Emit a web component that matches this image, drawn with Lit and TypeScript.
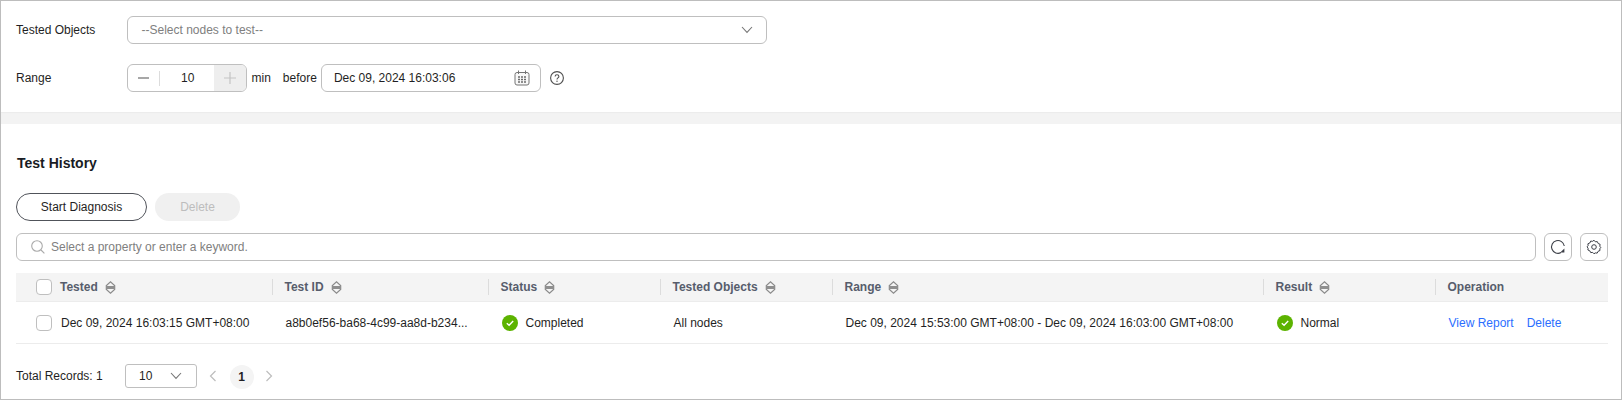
import { LitElement, html, css } from "lit";
import { customElement } from "lit/decorators.js";

const sortIcon = html`<svg class="sort" width="11" height="13" viewBox="0 0 11 13"><path d="M.9 5 5.5.8 10.1 5M.9 8l4.6 4.2L10.100 8" fill="none" stroke="#8a8a8a" stroke-width="1.1"/><path d="M.7 5h9.600v3H.7z" fill="#8f8f8f"/></svg>`;
const okIcon = html`<svg class="ok" width="16" height="16" viewBox="0 0 16 16"><circle cx="8" cy="8" r="8" fill="#5cb300"/><path d="M4.8 8.2 7.1 10.3 11.2 6" fill="none" stroke="#fff" stroke-width="1.4"/></svg>`;
const chev = (c: string) => html`<svg width="12" height="8" viewBox="0 0 12 8"><path d="M1 1l5 5.4L11 1" fill="none" stroke="${c}" stroke-width="1.1"/></svg>`;

const cols = [
  { label: "Tested", check: true },
  { label: "Test ID" },
  { label: "Status" },
  { label: "Tested Objects" },
  { label: "Range" },
  { label: "Result" },
  { label: "Operation", nosort: true },
];

@customElement("app-root")
export class AppRoot extends LitElement {
  static styles = css`
    :host { display: block; width: 1622px; height: 400px; box-sizing: border-box; border: 1px solid #bdbdbd; font: 12px "Liberation Sans", Arial, sans-serif; color: #1f1f24; background: #fff; overflow: hidden; }
    .top { height: 111px; box-sizing: border-box; padding: 15px 0 0 15px; display: flex; flex-direction: column; gap: 20px; }
    .row { display: flex; align-items: center; height: 28px; }
    .lbl { width: 111px; flex: none; }
    .box { box-sizing: border-box; height: 28px; border: 1px solid #bfbfbf; border-radius: 6px; display: flex; align-items: center; background: #fff; }
    .sel { width: 639.5px; padding: 0 13px 0 13.5px; justify-content: space-between; color: #808080; }
    .stepper { width: 119.5px; overflow: hidden; }
    .stepper .minus { width: 31px; height: 15px; display: flex; align-items: center; justify-content: center; border-right: 1px solid #dcdcdc; }
    .stepper .val { flex: 1; text-align: center; padding-left: 2px; }
    .stepper .plus { width: 32px; height: 100%; background: #eeeeee; display: flex; align-items: center; justify-content: center; }
    .min { margin-left: 5px; }
    .before { margin-left: 12px; margin-right: 4px; }
    .date { width: 220px; padding: 0 10px 0 12px; justify-content: space-between; }
    .help { margin-left: 9px; display: block; }
    .gap { height: 12px; background: #f3f3f3; box-shadow: inset 0 1px 1px #ececec; }
    .bottom { padding: 0 13px 0 15px; }
    h2 { margin: 0; font-size: 14px; font-weight: 700; line-height: 16px; padding: 31px 0 0 1px; color: #191c24; }
    .btns { display: flex; gap: 8px; margin-top: 22px; }
    .btn { box-sizing: border-box; height: 28px; border-radius: 14px; display: flex; align-items: center; justify-content: center; }
    .start { width: 131px; border: 1px solid #50535a; }
    .del { width: 85px; background: #f0f0f0; color: #bdbdbd; }
    .search { display: flex; gap: 8px; margin-top: 12px; }
    .sbox { flex: 1; padding-left: 14px; color: #808080; gap: 6px; }
    .sq { width: 28px; padding: 0; justify-content: center; flex: none; }
    .table { margin-top: 12px; display: grid; grid-template-columns: 255.5px 216px 172px 172px 431px 172px 173.5px; }
    .th { height: 29px; background: #f4f4f4; border-bottom: 1px solid #ececec; box-sizing: border-box; display: flex; align-items: center; font-weight: 700; color: #575d6c; gap: 7px; padding-left: 13px; position: relative; }
    .th + .th::before { content: ""; position: absolute; left: 0; top: 6px; height: 16px; width: 1px; background: #dcdcdc; }
    .th.first, .td.first { padding-left: 20px; }
    .th.first { gap: 8px; }
    .th.first .sort { margin-left: -1px; }
    .cb { width: 16px; height: 16px; box-sizing: border-box; border: 1px solid #bfbfbf; border-radius: 4px; background: #fff; flex: none; }
    .td { height: 42px; box-sizing: border-box; border-bottom: 1px solid #ececec; display: flex; align-items: center; padding-left: 14px; gap: 8px; white-space: nowrap; }
    .td.first { gap: 9px; }
    a { color: #2b6eff; text-decoration: none; }
    .ops { gap: 13px; }
    .foot { display: flex; align-items: center; margin-top: 20px; height: 24px; }
    .total { width: 109px; }
    .psel { width: 72px; height: 24px; border-radius: 3px; padding: 0 14px 0 13px; justify-content: space-between; }
    .pg { display: flex; align-items: center; margin-left: 12px; }
    .pn { width: 24px; height: 24px; border-radius: 12px; background: #f4f4f4; font-weight: 700; display: flex; align-items: center; justify-content: center; margin: 1px 11.5px 0 12.5px; }
  `;

  render() {
    return html`
      <div class="top">
        <div class="row">
          <div class="lbl">Tested Objects</div>
          <div class="box sel"><span>--Select nodes to test--</span>${chev("#777")}</div>
        </div>
        <div class="row">
          <div class="lbl">Range</div>
          <div class="box stepper">
            <div class="minus"><svg width="11" height="2" viewBox="0 0 11 2"><path d="M0 1h11" stroke="#8a8a8a" stroke-width="1.6"/></svg></div>
            <div class="val">10</div>
            <div class="plus"><svg width="12" height="12" viewBox="0 0 12 12"><path d="M0 6h12M6 0v12" stroke="#c4c4c4" stroke-width="1.2"/></svg></div>
          </div>
          <span class="min">min</span>
          <span class="before">before</span>
          <div class="box date"><span>Dec 09, 2024 16:03:06</span>
            <svg width="16" height="16" viewBox="0 0 16 16"><rect x="1" y="2.500" width="14" height="12.500" rx="2" fill="#f8f8f8" stroke="#757575"/><path d="M4.500 0.500v3.500M11.500 0.500v3.500" stroke="#757575"/><path d="M4 7h2M7 7h2M10 7h2M4 9.500h2M7 9.500h2M10 9.500h2M4 12h2M7 12h2M10 12h2" stroke="#6b6b6b" stroke-width="1.300"/></svg>
          </div>
          <svg class="help" width="14" height="14" viewBox="0 0 14 14"><circle cx="7" cy="7" r="6.400" fill="none" stroke="#4f4f4f" stroke-width="1.100"/><path d="M5.100 5.500c0-1.100.9-1.800 1.900-1.800s1.900.7 1.900 1.700c0 1.500-1.900 1.500-1.900 3" fill="none" stroke="#4f4f4f" stroke-width="1.100"/><circle cx="7" cy="10.300" r=".7" fill="#4f4f4f"/></svg>
        </div>
      </div>
      <div class="gap"></div>
      <div class="bottom">
        <h2>Test History</h2>
        <div class="btns"><div class="btn start">Start Diagnosis</div><div class="btn del">Delete</div></div>
        <div class="search">
          <div class="box sbox">
            <svg width="14" height="14" viewBox="0 0 14 14"><circle cx="6" cy="6" r="5.300" fill="none" stroke="#aaa" stroke-width="1.100"/><path d="M10 10l3.400 3.400" stroke="#aaa" stroke-width="1.100"/></svg>
            <span>Select a property or enter a keyword.</span>
          </div>
          <div class="box sq"><svg width="16" height="16" viewBox="0 0 16 16"><path d="M14.300 7A6.400 6.400 0 1 0 11 13.600" fill="none" stroke="#3c3f47" stroke-width="1.100"/><path d="M10.200 13.400h4.200V9.600z" fill="#3c3f47"/></svg></div>
          <div class="box sq"><svg width="16" height="16" viewBox="0 0 16 16"><path d="M8 1.200l1.300 1.600 2-.2.9 1.900 1.900.8-.3 2 1 1-1 1.500.2 1.700-1.900.8-.9 1.800-2-.2L8 14.800l-1.300-1.400-2 .2-.9-1.800-1.900-.8.2-1.700-1-1.500 1-1-.2-2 1.900-.8.9-1.900 2 .2z" fill="none" stroke="#3c3f47" stroke-width="1" stroke-linejoin="round"/><circle cx="8" cy="8" r="2.300" fill="none" stroke="#3c3f47"/></svg></div>
        </div>
        <div class="table">
          ${cols.map((c) => html`<div class="th ${c.check ? "first" : ""}">${c.check ? html`<span class="cb"></span>` : ""}<span>${c.label}</span>${c.nosort ? "" : sortIcon}</div>`)}
          <div class="td first"><span class="cb"></span><span>Dec 09, 2024 16:03:15 GMT+08:00</span></div>
          <div class="td"><span>a8b0ef56-ba68-4c99-aa8d-b234...</span></div>
          <div class="td">${okIcon}<span>Completed</span></div>
          <div class="td">All nodes</div>
          <div class="td">Dec 09, 2024 15:53:00 GMT+08:00 - Dec 09, 2024 16:03:00 GMT+08:00</div>
          <div class="td">${okIcon}<span>Normal</span></div>
          <div class="td ops"><a>View Report</a><a>Delete</a></div>
        </div>
        <div class="foot">
          <span class="total">Total Records: 1</span>
          <div class="box psel"><span>10</span>${chev("#777")}</div>
          <div class="pg">
            <svg width="8" height="12" viewBox="0 0 8 12"><path d="M6.500 1 1.500 6l5 5" fill="none" stroke="#bdbdbd" stroke-width="1.200"/></svg>
            <span class="pn">1</span>
            <svg width="8" height="12" viewBox="0 0 8 12"><path d="M1.500 1l5 5-5 5" fill="none" stroke="#bdbdbd" stroke-width="1.200"/></svg>
          </div>
        </div>
      </div>
    `;
  }
}
